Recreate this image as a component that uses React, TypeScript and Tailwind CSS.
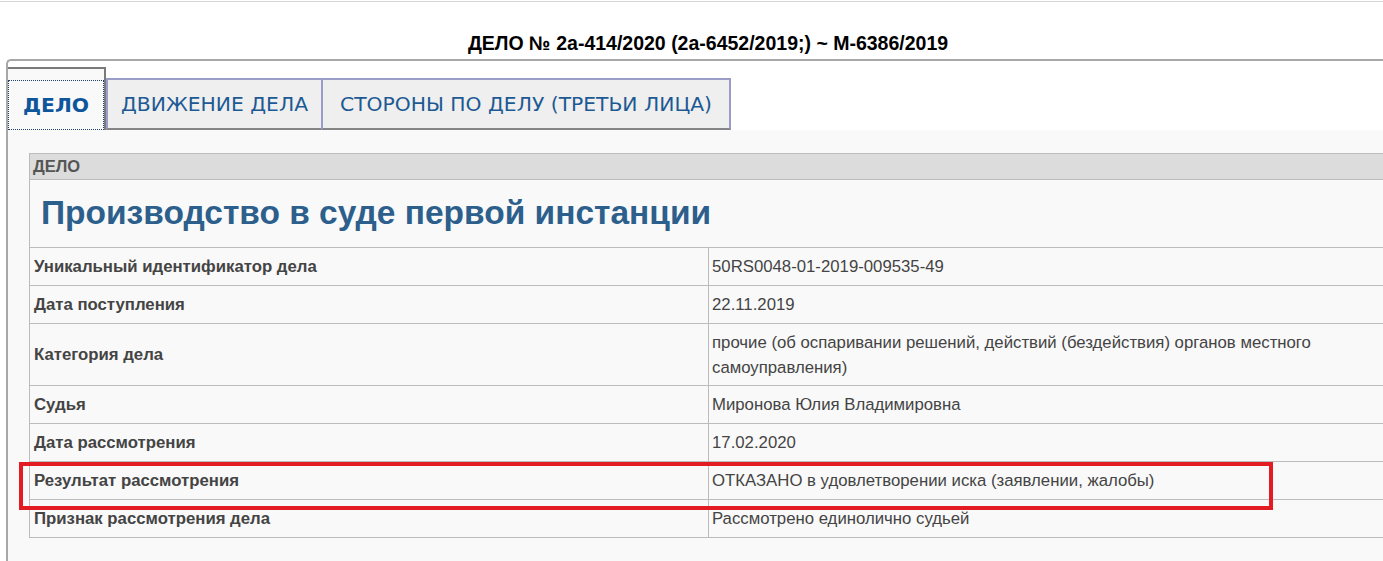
import type { ReactNode } from 'react'

const rows: { label: string; value: ReactNode; tall?: boolean }[] = [
  { label: 'Уникальный идентификатор дела', value: '50RS0048-01-2019-009535-49' },
  { label: 'Дата поступления', value: '22.11.2019' },
  {
    label: 'Категория дела',
    value: (
      <>
        прочие (об оспаривании решений, действий (бездействия) органов местного
        <br />
        самоуправления)
      </>
    ),
    tall: true,
  },
  { label: 'Судья', value: 'Миронова Юлия Владимировна' },
  { label: 'Дата рассмотрения', value: '17.02.2020' },
  { label: 'Результат рассмотрения', value: 'ОТКАЗАНО в удовлетворении иска (заявлении, жалобы)' },
  { label: 'Признак рассмотрения дела', value: 'Рассмотрено единолично судьей' },
]

function Row({ label, value, tall }: { label: string; value: ReactNode; tall?: boolean }) {
  return (
    <div className={`flex border-b border-[#bcbcbc] ${tall ? 'h-[62px]' : 'h-[38px]'}`}>
      <div className="flex w-[679px] shrink-0 items-center border-r border-[#bcbcbc] pl-[4px] font-bold text-[#444]">
        {label}
      </div>
      <div className="flex items-center pl-[3px] leading-[25px] text-[#444]">
        <div>{value}</div>
      </div>
    </div>
  )
}

export default function App() {
  return (
    <div className="relative h-[561px] w-full overflow-hidden bg-white font-['Liberation_Sans',Arial,sans-serif]">
      <div className="mt-px border-t border-[#d4d4d4]" />
      <div className="w-[1416px]">
        <h2 className="pt-[30px] text-center text-[19.5px] font-bold leading-[22px] text-black">
          ДЕЛО № 2а-414/2020 (2а-6452/2019;) ~ М-6386/2019
        </h2>

        <div className="ml-[6px] mt-[5px] rounded-tl-[5px] border-l-2 border-t-2 border-[#a8a8a8]">
          {/* tabs */}
          <div className="flex items-end pt-[6px] font-['DejaVu_Sans',Verdana,sans-serif] text-[20.3px] text-[#1d5a94]">
            <div className="h-[63px] w-[98px] border-r-2 border-t-2 border-[#7a7a7a] bg-[#f9f9f9] pt-[11px]">
              <div className="flex h-[50px] items-center justify-center border border-dotted border-[#1c3f66] font-bold text-[#0f559b]">
                ДЕЛО
              </div>
            </div>
            <div className="flex h-[52px] w-[217px] items-center justify-center border-x-2 border-t-2 border-b-2 border-x-[#9c9cc8] border-t-[#9c9cc8] border-b-[#858585] bg-[#efefef] pt-[1px]">
              ДВИЖЕНИЕ ДЕЛА
            </div>
            <div className="-ml-[2px] flex h-[52px] w-[410px] items-center justify-center border-x-2 border-t-2 border-b-2 border-x-[#9c9cc8] border-t-[#9c9cc8] border-b-[#858585] bg-[#efefef] pt-[1px]">
              СТОРОНЫ ПО ДЕЛУ (ТРЕТЬИ ЛИЦА)
            </div>
          </div>

          {/* content */}
          <div className="h-[440px] bg-[#f9f9f9] pl-[21px] pt-[23px] text-[16.75px]">
            <div className="w-[1370px] border-l border-t border-[#bcbcbc]">
              <div className="flex h-[26px] items-center border-b border-[#bcbcbc] bg-[#dcdcdc] pl-[3px] text-[16.5px] font-bold text-[#555]">
                ДЕЛО
              </div>
              <div className="flex h-[68px] items-center border-b border-[#bcbcbc] pl-[11px] text-[33.5px] font-bold text-[#2d5f8c]">
                Производство в суде первой инстанции
              </div>
              {rows.map((r) => (
                <Row key={r.label} {...r} />
              ))}
            </div>
          </div>
        </div>
      </div>

      {/* highlight overlay */}
      <div className="pointer-events-none absolute left-[19px] top-[462px] h-[48px] w-[1254px] border-4 border-[#e31b23]" />
    </div>
  )
}
